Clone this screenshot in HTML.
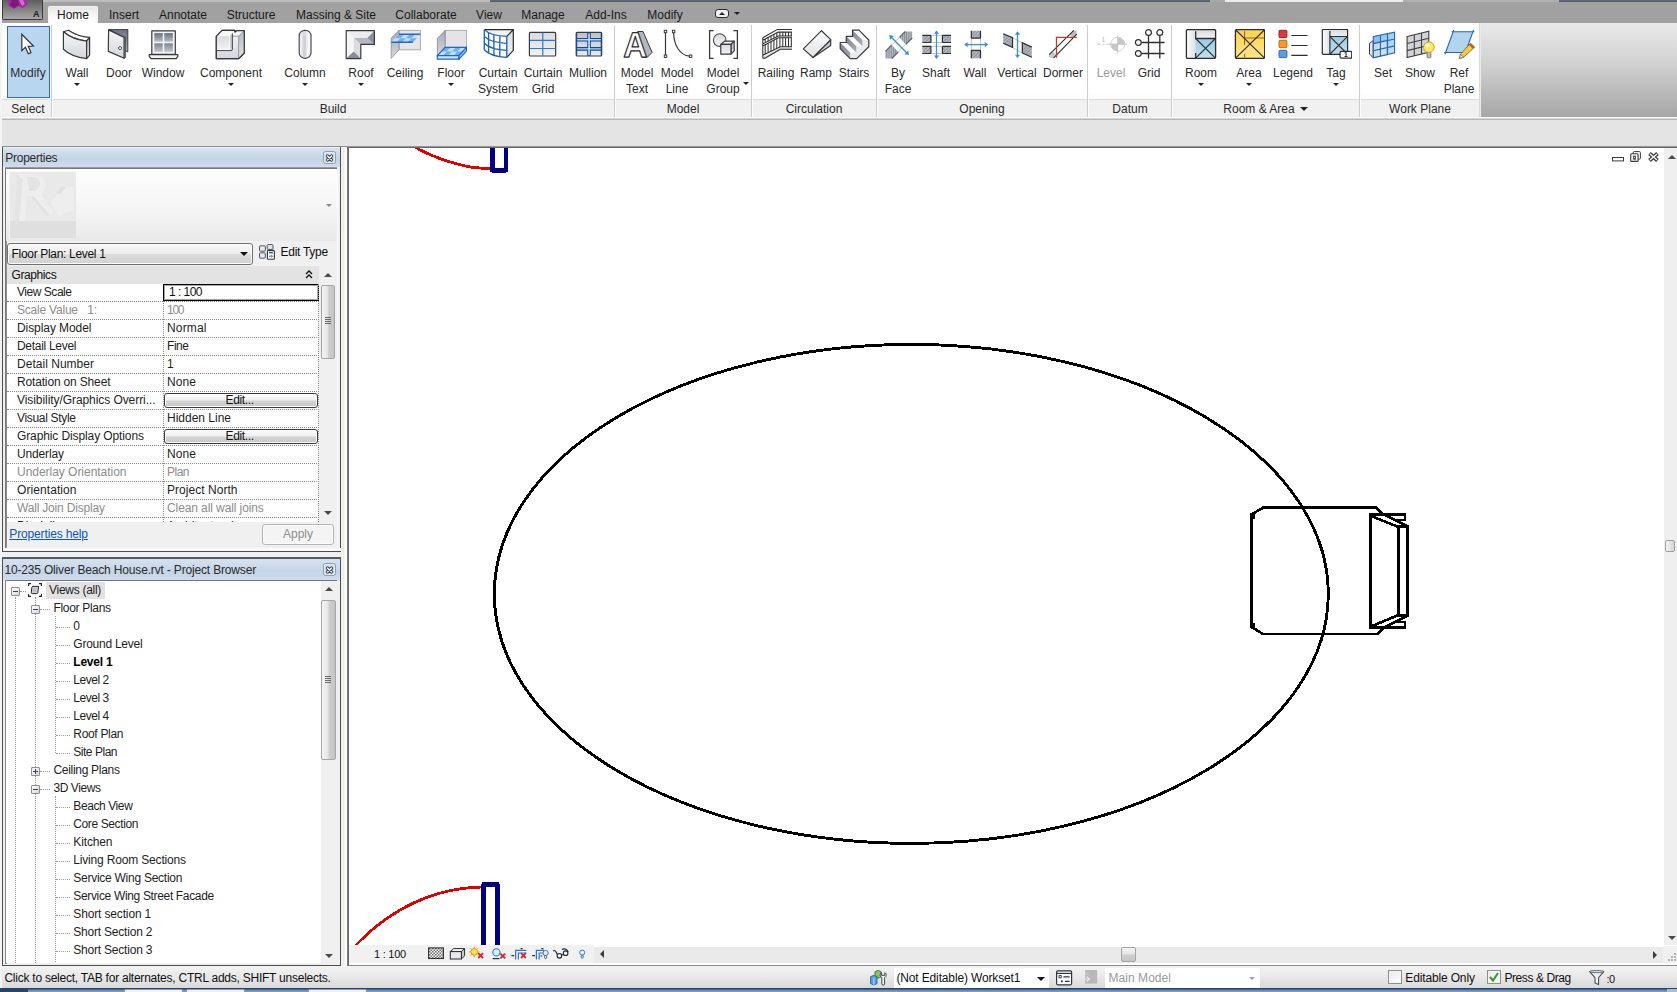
<!DOCTYPE html>
<html><head><meta charset="utf-8"><title>Revit</title><style>
*{box-sizing:border-box;margin:0;padding:0}
html,body{width:1677px;height:992px;overflow:hidden;background:#fff}
body{font-family:"Liberation Sans",sans-serif;font-size:12px;color:#1e1e1e;position:relative}
.a{position:absolute}
.t{position:absolute;white-space:nowrap;line-height:14px;height:14px}
.c{transform:translateX(-50%);text-align:center}
#topstrip{left:0;top:0;width:1677px;height:3px;background:#bdbdbd}
#tabbar{left:2px;top:2px;width:1675px;height:21px;background:#a1a1a1}
#ribbon{left:2px;top:23px;width:1478px;height:94px;background:linear-gradient(#ffffff 0,#ffffff 70px,#fbfbfb 76px)}
#ribrest{left:1480px;top:23px;width:197px;height:94px;background:linear-gradient(#e9e9e9,#d0d0d0 45%,#a6a6a6)}
#ptitle{left:2px;top:99px;width:1478px;height:18px;background:#f1f1f1;border-top:1px solid #dcdcdc}
.sep{position:absolute;top:25px;width:2px;height:92px;background:linear-gradient(90deg,#cdcdcd 0,#cdcdcd 1px,#fdfdfd 1px)}
#ribline{left:2px;top:117px;width:1675px;height:3px;background:linear-gradient(#fdfdfd 0,#fdfdfd 45%,#b2b2b2 55%,#b6b6b6 83%,#e4e4e4 100%)}
#optbar{left:2px;top:120px;width:1675px;height:26px;background:#e4e4e4}
#optline{left:2px;top:146px;width:345px;height:2px;background:linear-gradient(#8c8c8c 0,#8c8c8c 50%,#f2f2f2 50%)}
#dock{left:2px;top:148px;width:347px;height:819px;background:#f0f0f0}
.rl{color:#2b2b2b}
.pt{color:#2a2a2a}
.tab{color:#1a1a1a;font-size:12px}
.arr{position:absolute;width:0;height:0;border-left:3px solid transparent;border-right:3px solid transparent;border-top:3px solid #222}
.panel{position:absolute;background:#f0f0f0;border:1px solid #6d6d6d}
.ptbar{position:absolute;left:0;top:0;right:0;height:20px;background:linear-gradient(#dfe8f3,#c3d3e5);border-bottom:1px solid #6f7b88}
.xbtn{position:absolute;width:13px;height:13px;border:1px solid #8c9db4;border-radius:2.5px;background:#d3dfee;box-shadow:inset 0 0 0 1px #dfe8f4}
.row{position:absolute;left:0;width:312px;height:18px;border-bottom:1px dotted #8a8a8a}
.row .l{position:absolute;left:10px;top:1px;line-height:14px;white-space:nowrap;letter-spacing:-.27px}
.row .v{position:absolute;left:160px;top:1px;line-height:14px;white-space:nowrap;letter-spacing:-.27px}
.g{color:#8c8c8c}
.gdi{letter-spacing:-.27px}
.ebtn{position:absolute;left:157px;width:154px;height:15px;border:1px solid #3c3c3c;border-radius:3px;background:linear-gradient(#fdfdfd,#f0f0f0 45%,#d4d4d4 55%,#c8c8c8);text-align:center;line-height:13px;box-shadow:inset 0 0 0 1px #fff}
.tr{position:absolute;white-space:nowrap;line-height:14px;height:14px}
.hd{position:absolute;height:0;border-top:1px dotted #9a9a9a}
.vd{position:absolute;width:0;border-left:1px dotted #9a9a9a}
.box{position:absolute;width:9px;height:9px;border:1px solid #8e8e8e;background:linear-gradient(135deg,#fff,#d6d6d6);border-radius:1px}
.box i{position:absolute;left:1px;top:3px;width:5px;height:1px;background:#34426b}
.box b{position:absolute;left:3px;top:1px;width:1px;height:5px;background:#34426b}
.sb{position:absolute;background:#f0f0f0}
.thumb{position:absolute;border:1px solid #a6a6a6;border-radius:2px;background:linear-gradient(90deg,#f4f4f4,#e6e6e6 45%,#cfcfcf 55%,#c4c4c4)}
.ua{position:absolute;width:0;height:0;border-left:4px solid transparent;border-right:4px solid transparent;border-bottom:4px solid #4a4a4a}
.da{position:absolute;width:0;height:0;border-left:4px solid transparent;border-right:4px solid transparent;border-top:4px solid #4a4a4a}
.la{position:absolute;width:0;height:0;border-top:4px solid transparent;border-bottom:4px solid transparent;border-right:4px solid #3a3a3a}
.ra{position:absolute;width:0;height:0;border-top:4px solid transparent;border-bottom:4px solid transparent;border-left:4px solid #3a3a3a}
.grip{position:absolute;width:6px;height:7px;background:repeating-linear-gradient(#6a6a6a 0,#6a6a6a 1px,transparent 1px,transparent 2px)}
.cb{position:absolute;width:14px;height:14px;border:1px solid #8e8f8f;background:linear-gradient(135deg,#e9e9e9,#fff);box-shadow:inset 0 0 0 1px #f4f4f4}
</style></head><body>

<svg width="0" height="0" style="position:absolute"><defs>
<linearGradient id="gv" x1="0" y1="0" x2="0" y2="1"><stop offset="0" stop-color="#f7f7f8"/><stop offset="1" stop-color="#d4d6da"/></linearGradient>
<linearGradient id="gvl" x1="0" y1="0" x2="0" y2="1"><stop offset="0" stop-color="#fdfdfd"/><stop offset="1" stop-color="#e0e2e5"/></linearGradient>
<linearGradient id="gw" x1="0" y1="0" x2="0" y2="1"><stop offset="0" stop-color="#a4a8b1"/><stop offset="1" stop-color="#d9dadd"/></linearGradient>
<linearGradient id="gmu" x1="0" y1="0" x2="0" y2="1"><stop offset="0" stop-color="#bfc1c7"/><stop offset="1" stop-color="#ececee"/></linearGradient>
<linearGradient id="gv2" x1="0" y1="0" x2="0" y2="1"><stop offset="0" stop-color="#d9dbdf"/><stop offset="1" stop-color="#f2f2f3"/></linearGradient>
<linearGradient id="gd" x1="0" y1="0" x2="0" y2="1"><stop offset="0" stop-color="#6b7080"/><stop offset="1" stop-color="#b9bdc6"/></linearGradient>
<linearGradient id="gs" x1="0" y1="0" x2="0" y2="1"><stop offset="0" stop-color="#b4b8c1"/><stop offset="1" stop-color="#e3e4e7"/></linearGradient>
<linearGradient id="gh" x1="0" y1="0" x2="1" y2="0"><stop offset="0" stop-color="#fdfdfd"/><stop offset=".42" stop-color="#d4d6db"/><stop offset=".7" stop-color="#f1f1f2"/><stop offset="1" stop-color="#fefefe"/></linearGradient>
<linearGradient id="gy" x1="0" y1="0" x2="0" y2="1"><stop offset="0" stop-color="#ffd24d"/><stop offset="1" stop-color="#ffe68c"/></linearGradient>
<linearGradient id="gb" x1="0" y1="0" x2="0" y2="1"><stop offset="0" stop-color="#9ccbe6"/><stop offset="1" stop-color="#bfe0f1"/></linearGradient>
<linearGradient id="gbl" x1="0" y1="0" x2="1" y2="1"><stop offset="0" stop-color="#7ab7ee"/><stop offset="1" stop-color="#cfe6fb"/></linearGradient>
<pattern id="chk" width="6" height="6" patternUnits="userSpaceOnUse"><rect width="6" height="6" fill="#b9dbf8"/><rect width="3" height="3" fill="#6fb0ef"/><rect x="3" y="3" width="3" height="3" fill="#6fb0ef"/></pattern>
<pattern id="hat" width="2.5" height="2.5" patternUnits="userSpaceOnUse" patternTransform="rotate(-45)"><rect width="2.5" height="2.5" fill="#b3b7bf"/><rect width="2.5" height="1" fill="#8e939c"/></pattern>
<pattern id="vhat" width="2.2" height="4" patternUnits="userSpaceOnUse"><rect width="2.2" height="4" fill="#b3b7bf"/><rect width=".9" height="4" fill="#868b95"/></pattern>
<pattern id="chk2" width="3" height="3" patternUnits="userSpaceOnUse"><rect width="3" height="3" fill="#fff"/><rect width="1.5" height="1.5" fill="#6a6a6a"/><rect x="1.5" y="1.5" width="1.5" height="1.5" fill="#6a6a6a"/></pattern>
</defs></svg>

<div class="a" id="topstrip"></div>
<div class="a" id="tabbar"></div>
<div class="a" style="left:490px;top:0;width:720px;height:2px;background:linear-gradient(#69707e,#4d5564)"></div>
<div class="a" style="left:1210px;top:0;width:15px;height:2px;background:#a8a8a8"></div>
<div class="a" style="left:1225px;top:0;width:178px;height:2px;background:#ececec"></div>
<div class="a" style="left:1403px;top:0;width:156px;height:2px;background:#b0b0b0"></div>
<div class="a" style="left:1559px;top:0;width:118px;height:2px;background:linear-gradient(#69707e,#4d5564)"></div>
<div class="a" style="left:0;top:0;width:2px;height:992px;background:#f4f4f4"></div>
<div class="a" id="ribbon"></div>
<div class="a" id="ribrest"></div>
<div class="a" id="ptitle"></div>
<div class="a" id="ribline"></div>
<div class="a" id="optbar"></div>
<div class="a" id="optline"></div>
<div class="a" id="dock"></div>
<div class="a" style="left:2px;top:0;width:41px;height:20px;background:linear-gradient(#5e5e5e,#8a8a8a 60%,#a8a8a8);border:1px solid #3a3a3a;border-top:0;border-radius:0 0 2px 2px"></div>
<svg class="a" style="left:6px;top:0" width="24" height="12" viewBox="0 0 24 12"><path d="M2 0 L20 0 L22 4 L17 8 L12 6 L8 9 L3 6 Z" fill="#a3279c"/><path d="M6 0 L12 0 L13 5 L8 8 L4 5Z" fill="#7a1a78"/><path d="M13 0 L17 0 L19 4 L16 6 Z" fill="#d06ccc"/></svg>
<div class="t" style="left:33px;top:9px;font-size:9px;font-weight:bold;color:#1b1b1b;line-height:10px">A</div>
<div class="a" style="left:48px;top:6px;width:50px;height:18px;background:linear-gradient(#e6e6e6,#fafafa 60%,#ffffff);border:1px solid #f4f4f4;border-bottom:0;border-radius:2px 2px 0 0"></div>
<div class="t c tab" style="left:73px;top:8px">Home</div>
<div class="t c tab" style="left:124px;top:8px">Insert</div>
<div class="t c tab" style="left:183px;top:8px">Annotate</div>
<div class="t c tab" style="left:251px;top:8px">Structure</div>
<div class="t c tab" style="left:336px;top:8px">Massing &amp; Site</div>
<div class="t c tab" style="left:426px;top:8px">Collaborate</div>
<div class="t c tab" style="left:489px;top:8px">View</div>
<div class="t c tab" style="left:543px;top:8px">Manage</div>
<div class="t c tab" style="left:606px;top:8px">Add-Ins</div>
<div class="t c tab" style="left:665px;top:8px">Modify</div>
<div class="a" style="left:715px;top:9px;width:14px;height:9px;border:1px solid #2d2d2d;border-radius:3px;background:#f0f0f0"></div>
<div class="ua" style="left:719px;top:12px;border-left-width:3px;border-right-width:3px;border-bottom-width:3px;border-bottom-color:#222"></div>
<div class="arr" style="left:734px;top:12px"></div>
<div class="a" style="left:7px;top:26px;width:43px;height:72px;background:#b9d6f1;border:1px solid #2b6cb5"></div>
<div class="sep" style="left:51px"></div>
<div class="sep" style="left:614px"></div>
<div class="sep" style="left:751px"></div>
<div class="sep" style="left:876px"></div>
<div class="sep" style="left:1087px"></div>
<div class="sep" style="left:1171px"></div>
<div class="sep" style="left:1359px"></div>
<div class="a" style="left:1479px;top:23px;width:2px;height:94px;background:linear-gradient(90deg,#d0d0d0,#f4f4f4)"></div>
<svg class="a" style="left:12px;top:29px" width="32" height="32" viewBox="0 0 32 32"><path d="M9.8 5.3 V21.6 L13.4 18.3 L16.3 24.8 L19 23.6 L16.2 17.3 L21.4 17 Z" fill="#fcfcfc" stroke="#2e3440" stroke-width="1.2" stroke-linejoin="miter"/></svg>
<div class="t c rl" style="left:28px;top:66px">Modify</div>
<svg class="a" style="left:61px;top:29px" width="32" height="32" viewBox="0 0 32 32"><path d="M2.4 2.8 L7.4 1.2 C13 5 20 7.6 28.6 8.4 L25.6 12.2 C17 11.2 8 7.6 2.4 2.8Z" fill="#fafafa" stroke="#3a3a3c" stroke-width="1.2" stroke-linejoin="round"/><path d="M2.4 2.8 C8 7.6 17 11.2 25.6 12.2 V29.6 C16 28.4 8 25.6 2.4 20.2Z" fill="url(#gv)" stroke="#3a3a3c" stroke-width="1.2" stroke-linejoin="round"/><path d="M25.6 12.2 L28.6 8.4 V26.1 L25.6 29.6Z" fill="url(#gs)" stroke="#3a3a3c" stroke-width="1.2" stroke-linejoin="round"/></svg>
<div class="t c rl" style="left:77px;top:66px">Wall</div>
<div class="arr" style="left:74px;top:83px"></div>
<svg class="a" style="left:103px;top:29px" width="32" height="32" viewBox="0 0 32 32"><path d="M5.6 0.4 H24.8 V22.9 L21.2 21 V8.4Z" fill="url(#gd)" stroke="#3a3a3c" stroke-width="1"/><path d="M5.6 0.9 L21.2 8.4 V29.3 L5.3 22.4Z" fill="url(#gv)" stroke="#3a3a3c" stroke-width="1.2" stroke-linejoin="round"/><path d="M21.2 8.4 L22.6 7.8 V28.4 L21.2 29.3Z" fill="#9a9ea8" stroke="#3a3a3c" stroke-width=".8"/><circle cx="17.1" cy="19.1" r="1.5" fill="#fff" stroke="#3a3a3c" stroke-width=".9"/></svg>
<div class="t c rl" style="left:119px;top:66px">Door</div>
<svg class="a" style="left:147px;top:29px" width="32" height="32" viewBox="0 0 32 32"><rect x="4.8" y="1.8" width="23.5" height="23.6" fill="#f4f4f5" stroke="#3a3a3c" stroke-width="1.2" stroke-linejoin="round"/><rect x="7.3" y="4.1" width="8.4" height="8.6" fill="url(#gd)"/><rect x="17.3" y="4.1" width="8.6" height="8.6" fill="url(#gd)"/><rect x="7.3" y="14.3" width="8.4" height="8.5" fill="url(#gd)" opacity=".85"/><rect x="17.3" y="14.3" width="8.6" height="8.5" fill="url(#gd)" opacity=".85"/><path d="M2.2 25.6 H30.8 V27.4 L29.2 29.6 H4 L2.2 27.4Z" fill="#f2f2f3" stroke="#3a3a3c" stroke-width="1.2" stroke-linejoin="round"/></svg>
<div class="t c rl" style="left:163px;top:66px">Window</div>
<svg class="a" style="left:215px;top:29px" width="32" height="32" viewBox="0 0 32 32"><path d="M1.3 7.3 L7 1.4 H19.9 V3 L22.2 1.6 H29.3 V24 L23.6 29.6 H1.3Z" fill="url(#gv)" stroke="#3a3a3c" stroke-width="1.2" stroke-linejoin="round"/><path d="M23.6 7.2 L29.3 1.6 V24 L23.6 29.6Z" fill="url(#gs)"/><path d="M17.4 7.2 L22.2 1.6 H29.3 L23.6 7.2Z" fill="#f7f7f8"/><path d="M1.3 7.3 L7 1.4 H19.9 L14.6 7.3Z" fill="#f7f7f8"/><path d="M14.6 7.3 L17.4 4.2 V18 L14.6 20.4Z" fill="#c3c6cd"/><rect x="1.3" y="7.3" width="13.3" height="13.1" fill="url(#gv2)"/><path d="M23.6 7.2 V29.6 M23.6 7.2 L29.3 1.6 M17.4 7.2 H23.6" fill="none" stroke="#8d9097" stroke-width=".9"/><path d="M1.3 21.6 H16 Q17.4 21.6 17.4 20.2 V4.4" fill="none" stroke="#4a4a4e" stroke-width="1"/><path d="M1.3 20.3 H14.6 V7.3" fill="none" stroke="#fff" stroke-width="1"/><path d="M1.3 7.3 L7 1.4 H19.9 V3 L22.2 1.6 H29.3 V24 L23.6 29.6 H1.3Z" fill="none" stroke="#3a3a3c" stroke-width="1.2" stroke-linejoin="round"/></svg>
<div class="t c rl" style="left:231px;top:66px">Component</div>
<div class="arr" style="left:228px;top:83px"></div>
<svg class="a" style="left:289px;top:29px" width="32" height="32" viewBox="0 0 32 32"><rect x="10.2" y="1.3" width="11.8" height="28" rx="5.6" fill="url(#gh)" stroke="#4a4a4c" stroke-width="1.2"/><rect x="14.2" y="6.5" width="2.8" height="20.5" fill="#c6c9cf" opacity=".55"/></svg>
<div class="t c rl" style="left:305px;top:66px">Column</div>
<div class="arr" style="left:302px;top:83px"></div>
<svg class="a" style="left:345px;top:29px" width="32" height="32" viewBox="0 0 32 32"><path d="M1.2 1.7 H29.4 L22.4 9 H8.7Z" fill="#ececee"/><path d="M1.2 1.7 L8.7 9 V22.4 L1.2 29.6Z" fill="#f6f6f7"/><path d="M8.7 9 H22.4 L29.4 15.4 H15.8Z" fill="#b4b8c0"/><path d="M8.7 9 L15.8 15.4 V29.6 L8.7 22.4Z" fill="#dcdde0"/><path d="M22.4 9 L29.4 1.7 V15.4Z" fill="#8b909c"/><path d="M8.7 22.4 L1.2 29.6 H15.8Z" fill="#868b97"/><path d="M1.2 1.7 H29.4 V15.4 H15.8 V29.6 H1.2Z" fill="none" stroke="#3a3a3c" stroke-width="1.2" stroke-linejoin="round"/></svg>
<div class="t c rl" style="left:361px;top:66px">Roof</div>
<div class="arr" style="left:358px;top:83px"></div>
<svg class="a" style="left:389px;top:29px" width="32" height="32" viewBox="0 0 32 32"><path d="M10 1.4 H31.4 V20.8 H10Z" fill="#e6e6e8" stroke="#9a9a9c" stroke-width=".8"/><path d="M10 1.4 L2.2 9 V29.3 L10 20.8Z" fill="url(#gw)" stroke="#8e8e90" stroke-width=".8"/><path d="M10 5.2 L31.4 5.2 L23.9 13.2 L2.2 13.2Z" fill="#c4e0f9"/><path d="M10.0 5.2 L15.35 5.2 L11.49 9.2 L6.1 9.2Z M11.49 9.2 L16.88 9.2 L13.05 13.2 L7.62 13.2Z M20.7 5.2 L26.05 5.2 L22.26 9.2 L16.88 9.2Z M22.26 9.2 L27.65 9.2 L23.9 13.2 L18.47 13.2Z " fill="#6fb0ef"/><path d="M10 5.2 H31.4 M2.2 13.2 H23.9" stroke="#1f68c6" stroke-width="1.5"/></svg>
<div class="t c rl" style="left:405px;top:66px">Ceiling</div>
<svg class="a" style="left:435px;top:29px" width="32" height="32" viewBox="0 0 32 32"><path d="M10.1 1.4 H31.6 V18.4 H10.1Z" fill="#e4e4e6" stroke="#9a9a9c" stroke-width=".8"/><path d="M10.1 1.4 L2.4 9.5 V26.7 L10.1 18.4Z" fill="url(#gw)" stroke="#86868a" stroke-width=".8"/><path d="M10.1 18.4 L31.6 18.4 L24 26.7 L2.4 26.7Z" fill="#c4e0f9"/><path d="M10.1 18.4 L15.47 18.4 L11.64 22.55 L6.25 22.55Z M11.64 22.55 L17.03 22.55 L13.2 26.7 L7.8 26.7Z M20.85 18.4 L26.23 18.4 L22.41 22.55 L17.03 22.55Z M22.41 22.55 L27.8 22.55 L24.0 26.7 L18.6 26.7Z " fill="#6fb0ef"/><path d="M10.1 18.4 H31.6 L24 26.7 H2.4Z" fill="none" stroke="#1f68c6" stroke-width="1.2"/><path d="M2.4 26.7 H24 V30.2 H2.4Z" fill="#cfe6fb" stroke="#1f68c6" stroke-width="1.2"/><path d="M24 26.7 L31.6 18.4 V21.8 L24 30.2Z" fill="#9ccaf4" stroke="#1f68c6" stroke-width="1.2"/></svg>
<div class="t c rl" style="left:451px;top:66px">Floor</div>
<div class="arr" style="left:448px;top:83px"></div>
<svg class="a" style="left:482px;top:29px" width="32" height="32" viewBox="0 0 32 32"><path d="M2.3 .6 H31.3 L24.8 7.3 C14 7 6 4.4 2.3 .6Z" fill="#f1f1f2"/><path d="M24.8 7.3 L31.3 .6 V21.3 L24.8 28.3Z" fill="url(#gv2)"/><path d="M2.3 .6 C6 4.4 14 7 24.8 7.3 V28.3 C14 28 6 25 2.3 20.8Z" fill="#fbfcfe"/><path d="M2.3 .6 H31.3 V21.3 L24.8 28.3 M24.8 7.3 L31.3 .6" fill="none" stroke="#2a2a2c" stroke-width="1.2"/><path d="M2.3 .6 C6 4.4 14 7 24.8 7.3 M2.3 7.4 C6 11.2 14 13.8 24.8 14.3 M2.3 14.2 C6 18 14 20.8 24.8 21.3 M2.3 20.8 C6 25 14 28 24.8 28.3 M2.3 .6 V20.8 M6.6 4 V24.6 M11.9 5.9 V26.9 M17.8 6.9 V28 M24.8 7.3 V28.3" fill="none" stroke="#2163ad" stroke-width="1.35"/></svg>
<div class="t c rl" style="left:498px;top:66px">Curtain</div>
<div class="t c rl" style="left:498px;top:82px">System</div>
<svg class="a" style="left:527px;top:29px" width="32" height="32" viewBox="0 0 32 32"><rect x="2.4" y="3.4" width="26.3" height="23.6" rx="1" fill="url(#gv2)" stroke="#3a3a3c" stroke-width="1.2" stroke-linejoin="round"/><path d="M15.8 3.6 V26.8 M2.6 11.3 H28.5 M2.6 19.5 H28.5" stroke="#2b78d0" stroke-width="1.2"/></svg>
<div class="t c rl" style="left:543px;top:66px">Curtain</div>
<div class="t c rl" style="left:543px;top:82px">Grid</div>
<svg class="a" style="left:572px;top:29px" width="32" height="32" viewBox="0 0 32 32"><rect x="4.2" y="3.4" width="25.5" height="23.6" rx="1" fill="url(#gmu)" stroke="#3a3a3c" stroke-width="1.2" stroke-linejoin="round"/><path d="M4.4 10.8 H29.5 M4.4 19.9 H29.5" stroke="#17498f" stroke-width="3.6"/><path d="M17 3.6 V26.8" stroke="#17498f" stroke-width="3.6"/><path d="M4.6 3.8 V26.6 M29.3 3.8 V26.6" stroke="#17498f" stroke-width="1.2"/><path d="M5.2 10.8 H28.8 M5.2 19.9 H28.8" stroke="#a8dcff" stroke-width="1.4"/><path d="M17 4.4 V26" stroke="#bfe6ff" stroke-width="1.6"/></svg>
<div class="t c rl" style="left:588px;top:66px">Mullion</div>
<svg class="a" style="left:621px;top:29px" width="32" height="32" viewBox="0 0 32 32"><path d="M16.6 2.5 L22 2.5 L31.1 23.4 L26.3 28.3 L21.3 28.3Z" fill="#b3b7bf" stroke="#3a3a3c" stroke-width="1" stroke-linejoin="round"/><text transform="translate(14.2 28.3) scale(.94 1)" x="0" y="0" text-anchor="middle" font-family="Liberation Sans,sans-serif" font-weight="bold" font-size="35.4" fill="#fbfbfb" stroke="#2e2e30" stroke-width="1.25" stroke-linejoin="round" opacity=".995" style="text-rendering:geometricPrecision">A</text></svg>
<div class="t c rl" style="left:637px;top:66px">Model</div>
<div class="t c rl" style="left:637px;top:82px">Text</div>
<svg class="a" style="left:661px;top:29px" width="32" height="32" viewBox="0 0 32 32"><path d="M4.5 3.6 V26 M12.6 3.8 C13 17 19 26 28.4 27.2" fill="none" stroke="#3a3a3c" stroke-width="1.2"/><g fill="#fff" stroke="#3a3a3c" stroke-width="1"><rect x="3.3" y="1.3" width="2.4" height="2.4"/><rect x="3.3" y="26" width="2.4" height="2.4"/><rect x="11.4" y="1.3" width="2.4" height="2.4"/><rect x="28.4" y="26" width="2.4" height="2.4"/></g></svg>
<div class="t c rl" style="left:677px;top:66px">Model</div>
<div class="t c rl" style="left:677px;top:82px">Line</div>
<svg class="a" style="left:707px;top:29px" width="32" height="32" viewBox="0 0 32 32"><path d="M6.6 1.7 H2.6 V29.3 H6.6 M26.4 1.7 H30.4 V29.3 H26.4" fill="none" stroke="#3a3a3c" stroke-width="1.3"/><circle cx="12.7" cy="11.1" r="6.3" fill="url(#gv2)" stroke="#4a4a4c" stroke-width="1.1"/><path d="M13.8 15.4 L17.6 12.2 H27.2 L24 15.4Z" fill="#f4f4f5" stroke="#3a3a3c" stroke-width="1.2" stroke-linejoin="round"/><path d="M24 15.4 L27.2 12.2 V21.8 L24 25.1Z" fill="url(#gs)" stroke="#3a3a3c" stroke-width="1.2" stroke-linejoin="round"/><rect x="13.8" y="15.4" width="10.2" height="9.7" fill="url(#gv2)" stroke="#3a3a3c" stroke-width="1.2" stroke-linejoin="round"/></svg>
<div class="t c rl" style="left:723px;top:66px">Model</div>
<div class="t c rl" style="left:723px;top:82px">Group</div>
<div class="arr" style="left:743px;top:82px"></div>
<svg class="a" style="left:760px;top:29px" width="32" height="32" viewBox="0 0 32 32"><path d="M2.8 8.8 L17.5 .4 H32 V20.3 H20.3 L5 29.2 H2.8Z" fill="#fdfdfd"/><path d="M6 26.6 L20.3 18.4 H32 V20.3 H20.3 L5 29.2 H2.8 V28Z" fill="#d9dbdf"/><path d="M5.2 10.02 V13.67 M8.1 8.48 V12.18 M11 6.93 V10.69 M13.9 5.39 V9.21 M16.8 3.85 V7.72 M19.9 3.10 V7.00 M22.8 3.10 V7.00 M25.6 3.10 V7.00 M28.5 3.10 V7.00 M31.3 3.10 V7.00 M5.2 15.72 V25.13 M8.1 14.18 V23.73 M11 12.63 V22.32 M13.9 11.09 V20.91 M16.8 9.55 V19.50 M19.9 8.80 V17.99 M22.8 8.80 V17.80 M25.6 8.80 V17.80 M28.5 8.80 V17.80 M31.3 8.80 V17.80 " stroke="#2e2e30" stroke-width="1" fill="none"/><path d="M2.8 8.8 L17.5 .4 H32 M2.8 11.3 L18.2 3.1 H32 M2.8 14.9 L18.2 7 H32 M2.8 17 L18.2 8.8 H32 M2.8 26.3 L20.3 17.8 H32 M2.8 29.2 H5 L20.3 20.3 H32 M2.8 8.8 V29.2" fill="none" stroke="#2e2e30" stroke-width="1.05"/></svg>
<div class="t c rl" style="left:776px;top:66px">Railing</div>
<svg class="a" style="left:800px;top:29px" width="32" height="32" viewBox="0 0 32 32"><path d="M30.7 10.6 V16.5 L13 28.5Z" fill="url(#gs)" stroke="#3a3a3c" stroke-width="1.2" stroke-linejoin="round"/><path d="M3.3 19.9 L21.5 1.7 L30.7 10.6 L13 28.5Z" fill="url(#gvl)" stroke="#3a3a3c" stroke-width="1.2" stroke-linejoin="round"/></svg>
<div class="t c rl" style="left:816px;top:66px">Ramp</div>
<svg class="a" style="left:838px;top:29px" width="32" height="32" viewBox="0 0 32 32"><defs><linearGradient id="gr" x1="0" y1="0" x2="1" y2="1"><stop offset="0" stop-color="#6c727d"/><stop offset="1" stop-color="#bcc0c8"/></linearGradient></defs><path d="M12.2 23.4 H18.3 V17.3 H24.4 V11 H30.8 V17.7 L18.7 29.6 H12.2Z" fill="#e9ebee"/><path d="M14.5 1.2 H21 L30.8 11 H24.4Z M8.3 7.3 H14.5 L24.4 17.3 H18.3Z M2.2 13.5 H8.3 L18.3 23.4 H12.2Z" fill="#fdfdfd"/><path d="M14.5 1.2 V7.3 L24.4 17.3 V11Z M8.3 7.3 V13.5 L18.3 23.4 V17.3Z M2.2 13.5 V19.6 L12.2 29.6 V23.4Z" fill="url(#gr)"/><path d="M2.2 13.5 H8.3 V7.3 H14.5 V1.2 H21 L30.8 11 V17.7 L18.7 29.6 H12.2 L2.2 19.6Z" fill="none" stroke="#3a3a3c" stroke-width="1.2" stroke-linejoin="round"/></svg>
<div class="t c rl" style="left:854px;top:66px">Stairs</div>
<svg class="a" style="left:882px;top:29px" width="32" height="32" viewBox="0 0 32 32"><path d="M17.4 8.4 L23.3 2.5 H30.2 V9 L23.8 15.4Z" fill="url(#vhat)"/><path d="M3.4 22.4 L9.8 15.9 L16.3 22.9 L9.8 29.6 H3.4Z" fill="url(#vhat)"/><path d="M17.4 8.4 L23.3 2.5 M23.8 15.4 L30.2 9 M3.4 22.4 L9.8 15.9 M9.8 29.6 L16.3 22.9" stroke="#55585f" stroke-width="1.1"/><path d="M9.8 15.9 L17.4 8.4 M16.3 22.9 L23.8 15.4" stroke="#c9c9cb" stroke-width="1"/><path d="M8.6 7.5 L25.6 24.7" stroke="#3b8de0" stroke-width="1.4"/><path d="M7.2 6.1 l4.6 .8 l-3.8 3.8Z M27 26.1 l-4.6 -.8 l3.8 -3.8Z" fill="#3b8de0"/></svg>
<div class="t c rl" style="left:898px;top:66px">By</div>
<div class="t c rl" style="left:898px;top:82px">Face</div>
<svg class="a" style="left:920px;top:29px" width="32" height="32" viewBox="0 0 32 32"><path d="M10.9 6.3 H22.4 M10.9 13.5 H22.4 M10.9 17.3 H22.4 M10.9 24.5 H22.4" stroke="#c4c4c6" stroke-width="1"/><rect x="2.3" y="6.3" width="8.6" height="7.2" fill="url(#hat)"/><path d="M2.3 6.3 H10.899999999999999 M2.3 13.5 H10.899999999999999 M10.899999999999999 6.3 V13.5 " stroke="#2e2e30" stroke-width="1.2" fill="none"/><rect x="22.4" y="6.3" width="8.6" height="7.2" fill="url(#hat)"/><path d="M22.4 6.3 H31.0 M22.4 13.5 H31.0 M22.4 6.3 V13.5 " stroke="#2e2e30" stroke-width="1.2" fill="none"/><rect x="2.3" y="17.3" width="8.6" height="7.2" fill="url(#hat)"/><path d="M2.3 17.3 H10.899999999999999 M2.3 24.5 H10.899999999999999 M10.899999999999999 17.3 V24.5 " stroke="#2e2e30" stroke-width="1.2" fill="none"/><rect x="22.4" y="17.3" width="8.6" height="7.2" fill="url(#hat)"/><path d="M22.4 17.3 H31.0 M22.4 24.5 H31.0 M22.4 17.3 V24.5 " stroke="#2e2e30" stroke-width="1.2" fill="none"/><path d="M16.5 2.4 V28.9" stroke="#3b8de0" stroke-width="1.3"/><path d="M16.5 1.4 l-2.6 3.4 h5.2Z M16.5 29.9 l-2.6 -3.4 h5.2Z" fill="#3b8de0"/></svg>
<div class="t c rl" style="left:936px;top:66px">Shaft</div>
<svg class="a" style="left:959px;top:29px" width="32" height="32" viewBox="0 0 32 32"><path d="M12.3 9.2 V21.3 M21.5 9.2 V21.3" stroke="#c4c4c6" stroke-width="1"/><rect x="12.3" y="1.7" width="9.2" height="7.5" fill="url(#hat)"/><path d="M12.3 9.2 H21.5 M21.5 1.7 V9.2 M12.3 1.7 V9.2 " stroke="#2e2e30" stroke-width="1.2" fill="none"/><rect x="12.3" y="21.3" width="9.2" height="8" fill="url(#hat)"/><path d="M12.3 21.3 H21.5 M21.5 21.3 V29.3 M12.3 21.3 V29.3 " stroke="#2e2e30" stroke-width="1.2" fill="none"/><path d="M6.2 15.6 H28.2" stroke="#3b8de0" stroke-width="1.3"/><path d="M5.2 15.6 l3.4 -2.6 v5.2Z M29.2 15.6 l-3.4 -2.6 v5.2Z" fill="#3b8de0"/></svg>
<div class="t c rl" style="left:975px;top:66px">Wall</div>
<svg class="a" style="left:1001px;top:29px" width="32" height="32" viewBox="0 0 32 32"><path d="M11.5 8.7 L21.3 13.8 M11.5 18.4 L21.3 24" stroke="#c4c4c6" stroke-width="1"/><path d="M2.2 4.7 L11.5 8.7 V18.4 L2.2 14.3Z" fill="url(#hat)"/><path d="M21.3 13.8 L30.8 18.1 V28.3 L21.3 24Z" fill="url(#hat)"/><path d="M2.2 4.7 L11.5 8.7 V18.4 L2.2 14.3 M21.3 24 V13.8 L30.8 18.1 M21.3 24 L30.8 28.3" fill="none" stroke="#2e2e30" stroke-width="1.2"/><path d="M16.5 3.3 V28.1" stroke="#3b8de0" stroke-width="1.3"/><path d="M16.5 2.3 l-2.6 3.4 h5.2Z M16.5 29.1 l-2.6 -3.4 h5.2Z" fill="#3b8de0"/></svg>
<div class="t c rl" style="left:1017px;top:66px">Vertical</div>
<svg class="a" style="left:1047px;top:29px" width="32" height="32" viewBox="0 0 32 32"><path d="M22.5 5.5 L26.8 1.4 H29.4 L29.8 5.2 L26 9Z" fill="#b8bcc3"/><path d="M2.2 25.6 L5.8 22.2 L9.4 26 L6.5 29.1 H3.2 L1.8 27.6Z" fill="#c6c9ce"/><path d="M2.2 25.6 L26.8 1.4 M6.5 29.1 L29.8 5.2" stroke="#2e2e30" stroke-width="1.1"/><path d="M9.5 28.8 V8.4 H29.8" fill="none" stroke="#c2392f" stroke-width="1.3"/></svg>
<div class="t c rl" style="left:1063px;top:66px">Dormer</div>
<svg class="a" style="left:1095px;top:29px" width="32" height="32" viewBox="0 0 32 32"><path d="M22.7 15.2 V8.2 A7 7 0 0 1 29.7 15.2Z M22.7 15.2 V22.2 A7 7 0 0 1 15.7 15.2Z" fill="#c6c6c6"/><circle cx="22.7" cy="15.2" r="7" fill="none" stroke="#d4d4d4" stroke-width="1"/><path d="M2 15.2 H6 M8 15.2 H9.5 M11.5 15.2 H32 M22.7 6.3 V24.5" stroke="#c6c6c6" stroke-width="1"/><text x="6.2" y="12.6" font-family="Liberation Sans,sans-serif" font-size="7.5" fill="#bdbdbd">1</text></svg>
<div class="t c rl" style="left:1111px;top:66px;color:#9a9a9a">Level</div>
<svg class="a" style="left:1133px;top:29px" width="32" height="32" viewBox="0 0 32 32"><path d="M15.5 6.3 V29.6 M26.8 6.3 V29.6 M8.3 13.5 H31.6 M8.3 24.5 H31.6" stroke="#2e2e30" stroke-width="1.3"/><g fill="#fff" stroke="#2e2e30" stroke-width="1.2"><circle cx="15.5" cy="3.5" r="2.9"/><circle cx="26.8" cy="3.5" r="2.9"/><circle cx="5.3" cy="13.5" r="2.9"/><circle cx="5.3" cy="24.5" r="2.9"/></g></svg>
<div class="t c rl" style="left:1149px;top:66px">Grid</div>
<svg class="a" style="left:1185px;top:29px" width="32" height="32" viewBox="0 0 32 32"><rect x="1.4" y=".6" width="29.2" height="28.7" rx="1.2" fill="url(#gh)"/><rect x="10.7" y="1" width="19.6" height="8.6" fill="url(#gv2)"/><rect x="10.7" y="9.5" width="19.7" height="19.6" fill="url(#gb)"/><path d="M10.7 9.5 L30.4 29.1 M30.4 9.5 L10.7 29.1" stroke="#2e2e30" stroke-width="1.1"/><path d="M10.7 2.3 V9.5 H30.6 M10.7 24 V29.3" fill="none" stroke="#2e2e30" stroke-width="1.3"/><rect x="1.4" y=".6" width="29.2" height="28.7" rx="1.2" fill="none" stroke="#2e2e30" stroke-width="1.3"/></svg>
<div class="t c rl" style="left:1201px;top:66px">Room</div>
<div class="arr" style="left:1198px;top:83px"></div>
<svg class="a" style="left:1233px;top:29px" width="32" height="32" viewBox="0 0 32 32"><rect x="2.4" y=".6" width="29.3" height="28.7" rx="1.2" fill="url(#gy)" stroke="#2e2e30" stroke-width="1.3"/><path d="M11.6 2.3 V15.9 M11.6 25 V28.5 M11.6 9 H31.4" fill="none" stroke="#8a6d14" stroke-width="1.1"/><path d="M2.8 1 L31.3 28.9 M31.3 1 L2.8 28.9" stroke="#2e2e30" stroke-width="1.1"/></svg>
<div class="t c rl" style="left:1249px;top:66px">Area</div>
<div class="arr" style="left:1246px;top:83px"></div>
<svg class="a" style="left:1277px;top:29px" width="32" height="32" viewBox="0 0 32 32"><rect x="2" y="1.3" width="7.9" height="7.3" rx="1" fill="#dc3b3e" stroke="#a01e22" stroke-width="1"/><rect x="2" y="11.3" width="7.9" height="7.4" rx="1" fill="#f79a1f" stroke="#c46a0a" stroke-width="1"/><rect x="2" y="21.3" width="7.9" height="7.3" rx="1" fill="#5b9fe2" stroke="#2b6cb5" stroke-width="1"/><path d="M14.3 6.5 H30.6 M14.3 16.5 H30.6 M14.3 26.3 H30.6" stroke="#2e2e30" stroke-width="1.2"/></svg>
<div class="t c rl" style="left:1293px;top:66px">Legend</div>
<svg class="a" style="left:1320px;top:29px" width="32" height="32" viewBox="0 0 32 32"><rect x="2.3" y=".4" width="25.3" height="24.9" rx="1" fill="url(#gh)"/><rect x="9.9" y=".8" width="17.4" height="7" fill="url(#gv2)"/><rect x="10.1" y="7.6" width="17.3" height="17.5" fill="url(#gb)"/><path d="M10.1 7.6 L27.4 25 M27.4 7.6 L10.1 25" stroke="#2e2e30" stroke-width="1.1"/><path d="M9.9 1.9 V25 M9.9 7.5 H27.4" fill="none" stroke="#2e2e30" stroke-width="1.2"/><rect x="2.3" y=".4" width="25.3" height="24.9" rx="1" fill="none" stroke="#2e2e30" stroke-width="1.2"/><rect x="20.1" y="22.3" width="11.6" height="6.8" rx="1" fill="#fff" stroke="#2e2e30" stroke-width="1.2"/><text x="25.9" y="28.3" text-anchor="middle" font-family="Liberation Sans,sans-serif" font-weight="bold" font-size="6.6" fill="#111">1</text></svg>
<div class="t c rl" style="left:1336px;top:66px">Tag</div>
<div class="arr" style="left:1333px;top:83px"></div>
<svg class="a" style="left:1367px;top:29px" width="32" height="32" viewBox="0 0 32 32"><path d="M2.5 14.4 L6.3 11.5 V28.8 L2.5 25Z" fill="#e8e8ea" stroke="#3a3a3c" stroke-width="1"/><path d="M6.3 7.5 L27.6 3.1 V23.8 L6.3 28.8Z" fill="url(#gbl)"/><path d="M6.3 14 L20 11 V26 L6.3 28.8Z" fill="#d9e4ee" opacity=".7" stroke="#6a7a8a" stroke-width=".7"/><path d="M6.3 7.5 L27.6 3.1 V23.8 L6.3 28.8Z M13.4 6 V27.2 M20.5 4.6 V25.5 M6.3 14.6 L27.6 10 M6.3 21.7 L27.6 16.9" fill="none" stroke="#2565ae" stroke-width="1.1"/></svg>
<div class="t c rl" style="left:1383px;top:66px">Set</div>
<svg class="a" style="left:1404px;top:29px" width="32" height="32" viewBox="0 0 32 32"><path d="M3.1 7.5 L24.8 2.3 V23.2 L3.1 28.6Z" fill="#d2d3d6"/><path d="M3.1 7.5 L24.8 2.3 V23.2 L3.1 28.6Z M10.3 5.8 V26.8 M17.5 4 V25 M3.1 14.5 L24.8 9.3 M3.1 21.6 L24.8 16.2" fill="none" stroke="#3f3f42" stroke-width="1.1"/><rect x="23" y="23" width="3.9" height="5.8" rx="1" fill="#b9bcc2" stroke="#6a6a6c" stroke-width=".8"/><circle cx="24.9" cy="18.2" r="5.3" fill="#ffe763" stroke="#c9a41c" stroke-width="1"/><circle cx="23.4" cy="16.4" r="2" fill="#fff8c8"/></svg>
<div class="t c rl" style="left:1420px;top:66px">Show</div>
<svg class="a" style="left:1443px;top:29px" width="32" height="32" viewBox="0 0 32 32"><path d="M10.1 2.8 H29.9 L22.3 23.5 H2.6Z" fill="#b3d4ee"/><path d="M8.6 2.8 H31.4 M1.1 23.5 H23.8 M10.8 .9 L2 25.2 M30.6 .9 L21.7 25.2" stroke="#2565ae" stroke-width="1.1" fill="none"/><path d="M27.6 14.2 L31.6 18.2 L20.5 28.3 L16.4 29.4 L17.5 25.2Z" fill="#f6c945" stroke="#8a6a1a" stroke-width=".9" stroke-linejoin="round"/><path d="M27.6 14.2 L31.6 18.2 L29.8 19.8 L25.8 15.8Z" fill="#b0632a"/><path d="M17.5 25.2 L20.5 28.3 L16.4 29.4Z" fill="#f3f3f3" stroke="#555" stroke-width=".7"/></svg>
<div class="t c rl" style="left:1459px;top:66px">Ref</div>
<div class="t c rl" style="left:1459px;top:82px">Plane</div>
<div class="t c pt" style="left:28px;top:102px">Select</div>
<div class="t c pt" style="left:333px;top:102px">Build</div>
<div class="t c pt" style="left:683px;top:102px">Model</div>
<div class="t c pt" style="left:814px;top:102px">Circulation</div>
<div class="t c pt" style="left:982px;top:102px">Opening</div>
<div class="t c pt" style="left:1130px;top:102px">Datum</div>
<div class="t c pt" style="left:1259px;top:102px">Room &amp; Area</div>
<div class="t c pt" style="left:1420px;top:102px">Work Plane</div>
<div class="arr" style="left:1300px;top:107px;border-left-width:4px;border-right-width:4px;border-top-width:4px"></div>
<div class="panel" style="left:2px;top:147px;width:339px;height:405px;border-top:0;border-color:#4e4e4e"></div>
<div class="a" style="left:3px;top:148px;width:337px;height:19px;background:linear-gradient(#d6e2f0,#c4d4e7 60%,#cfdcec)"></div>
<div class="a" style="left:3px;top:167px;width:337px;height:1px;background:#f4f6f9"></div>
<div class="a" style="left:5px;top:167px;width:332px;height:2px;background:linear-gradient(#a9a9a9,#686868)"></div>
<div class="a" style="left:337px;top:168px;width:1px;height:381px;background:#fdfdfd"></div>
<div id="t_prop" class="t" style="left:5.3px;top:151px;letter-spacing:-0.266px;color:#2b2b2b">Properties</div>
<div class="xbtn" style="left:323px;top:151px"></div>
<svg class="a" style="left:323px;top:151.5px" width="13" height="12" viewBox="0 0 13 12"><path d="M4.4 4 L8.6 8 M8.6 4 L4.4 8" stroke="#3a3f48" stroke-width="3.2" stroke-linecap="round" fill="none"/><path d="M4.4 4 L8.6 8 M8.6 4 L4.4 8" stroke="#fbfcfe" stroke-width="1.3" stroke-linecap="round" fill="none"/></svg>
<div class="a" style="left:5px;top:168px;width:2px;height:380px;background:linear-gradient(90deg,#6c6c6c,#9a9a9a)"></div>
<div class="a" style="left:3px;top:548px;width:338px;height:3px;background:#fafafa"></div>
<div class="a" style="left:6px;top:169px;width:331px;height:72px;background:linear-gradient(#fdfdfd,#f6f6f6 50%,#e9e9e9)"></div>
<div class="a" style="left:9px;top:172px;width:67px;height:66px;background:linear-gradient(160deg,#ececec,#dedede 50%,#e6e6e6);border:1px solid #f3f3f3"></div>
<svg class="a" style="left:10px;top:172px" width="66" height="66" viewBox="0 0 66 66"><rect width="66" height="66" fill="#e9e9e9"/><rect y="49" width="66" height="17" fill="#dfdfdf"/><path d="M7 2 L4 49 L15 49 L17 24 L23 24 L37 44 L45 41 L31 22 C38 18 38 6 27 3 Z" fill="#eeeeee"/><path d="M17 5 L24 5 C32 7 32 15 25 19 L19 19Z" fill="#e3e3e3"/><path d="M7 2 L4 49 L9 49 L13 8Z" fill="#e4e4e4"/><path d="M21 25 L24 25 L40 43 L37 44Z" fill="#e2e2e2"/><path d="M40 30 L55 14 L64 15 L64 38 L48 44 Z" fill="#eeeeee"/><path d="M46 21 L53 14 L56 15 L50 22Z" fill="#e0e0e0"/></svg>
<div class="arr" style="left:326px;top:204px;border-top-color:#8c8c8c"></div>
<div class="a" style="left:7px;top:243px;width:246px;height:22px;border:1px solid #707070;border-radius:3px;background:linear-gradient(#f8f8f8,#ececec 50%,#dcdcdc 52%,#d2d2d2);box-shadow:inset 0 0 0 1px #fcfcfc"></div>
<div id="t_fp" class="t" style="left:11.6px;top:247px;letter-spacing:-0.321px;color:#111">Floor Plan: Level 1</div>
<div class="arr" style="left:240px;top:252px;border-left-width:4px;border-right-width:4px;border-top-width:4px;border-top-color:#111"></div>
<svg class="a" style="left:259px;top:244px" width="16" height="16" viewBox="0 0 16 16"><g fill="#e4e7eb" stroke="#50555c" stroke-width="1"><rect x=".5" y="1.8" width="5.8" height="5.4" rx=".8"/><rect x="8.2" y=".6" width="5.8" height="4.8" rx=".8"/><rect x=".5" y="8.8" width="5.8" height="5.4" rx=".8"/></g><rect x="8.4" y="6.4" width="7" height="8.9" rx="1" fill="#fff" stroke="#2e3640" stroke-width="1.1"/><rect x="10" y="7.8" width="4" height="1.6" fill="#1f5fa8"/><path d="M10 12.2 H12.5 M12.2 11 L13.6 12.2 L12.2 13.4" fill="none" stroke="#2e3640" stroke-width=".8"/></svg>
<div id="t_et" class="t" style="left:280.5px;top:245px;letter-spacing:-0.265px;color:#111">Edit Type</div>
<div class="a" style="left:7px;top:266px;width:312px;height:18px;background:#e3e3e3"></div>
<div id="t_gr" class="t" style="left:11.6px;top:268px;letter-spacing:-0.418px;color:#111">Graphics</div>
<svg class="a" style="left:305px;top:270px" width="8" height="9" viewBox="0 0 8 9"><path d="M1 4 L4 1 L7 4 M1 8 L4 5 L7 8" stroke="#111" stroke-width="1.3" fill="none"/></svg>
<div class="a" style="left:7px;top:284px;width:312px;height:238px;background:#fff;overflow:hidden">
<div class="row" style="top:0px"></div>
<div id="rl0" class="t" style="left:10px;top:1px;letter-spacing:-0.462px;">View Scale</div>
<div class="row" style="top:18px"></div>
<div id="rl1" class="t g" style="left:10px;top:19px;letter-spacing:-0.212px;">Scale Value &nbsp;&nbsp;1:</div>
<div id="rv1" class="t g" style="left:160px;top:19px;letter-spacing:-1.266px;">100</div>
<div class="row" style="top:36px"></div>
<div id="rl2" class="t" style="left:10px;top:37px;letter-spacing:-0.073px;">Display Model</div>
<div id="rv2" class="t" style="left:160px;top:37px;letter-spacing:0.166px;">Normal</div>
<div class="row" style="top:54px"></div>
<div id="rl3" class="t" style="left:10px;top:55px;letter-spacing:-0.292px;">Detail Level</div>
<div id="rv3" class="t" style="left:160px;top:55px;letter-spacing:-0.451px;">Fine</div>
<div class="row" style="top:72px"></div>
<div id="rl4" class="t" style="left:10px;top:73px;letter-spacing:0.025px;">Detail Number</div>
<div id="rv4" class="t" style="left:160px;top:73px;letter-spacing:-3.562px;">1</div>
<div class="row" style="top:90px"></div>
<div id="rl5" class="t" style="left:10px;top:91px;letter-spacing:-0.162px;">Rotation on Sheet</div>
<div id="rv5" class="t" style="left:160px;top:91px;letter-spacing:0.100px;">None</div>
<div class="row" style="top:108px"></div>
<div id="rl6" class="t" style="left:10px;top:109px;letter-spacing:-0.070px;">Visibility/Graphics Overri...</div>
<div class="ebtn" style="top:109px"></div>
<div id="rv6" class="t" style="left:218.5px;top:109px;letter-spacing:-0.363px;color:#111">Edit...</div>
<div class="row" style="top:126px"></div>
<div id="rl7" class="t" style="left:10px;top:127px;letter-spacing:-0.318px;">Visual Style</div>
<div id="rv7" class="t" style="left:160px;top:127px;letter-spacing:-0.006px;">Hidden Line</div>
<div class="row" style="top:144px"></div>
<div id="rl8" class="t" style="left:10px;top:145px;letter-spacing:-0.109px;">Graphic Display Options</div>
<div class="ebtn" style="top:145px"></div>
<div id="rv8" class="t" style="left:218.5px;top:145px;letter-spacing:-0.363px;color:#111">Edit...</div>
<div class="row" style="top:162px"></div>
<div id="rl9" class="t" style="left:10px;top:163px;letter-spacing:-0.147px;">Underlay</div>
<div id="rv9" class="t" style="left:160px;top:163px;letter-spacing:0.100px;">None</div>
<div class="row" style="top:180px"></div>
<div id="rl10" class="t g" style="left:10px;top:181px;letter-spacing:-0.029px;">Underlay Orientation</div>
<div id="rv10" class="t g" style="left:160px;top:181px;letter-spacing:-0.506px;">Plan</div>
<div class="row" style="top:198px"></div>
<div id="rl11" class="t" style="left:10px;top:199px;letter-spacing:0.080px;">Orientation</div>
<div id="rv11" class="t" style="left:160px;top:199px;letter-spacing:0.039px;">Project North</div>
<div class="row" style="top:216px"></div>
<div id="rl12" class="t g" style="left:10px;top:217px;letter-spacing:-0.189px;">Wall Join Display</div>
<div id="rv12" class="t g" style="left:160px;top:217px;letter-spacing:-0.097px;">Clean all wall joins</div>
<div class="row" style="top:234px"></div>
<div id="rl13" class="t" style="left:10px;top:235px;letter-spacing:0.000px;">Discipline</div>
<div id="rv13" class="t" style="left:160px;top:235px;letter-spacing:0.000px;">Architectural</div>
<div class="a" style="left:156px;top:0;width:0;height:238px;border-left:1px dotted #8a8a8a"></div>
<div class="a" style="left:156px;top:0;width:156px;height:17px;border:1px solid #000;outline:1px solid rgba(0,0,0,.35);outline-offset:-2px;background:#fff"></div>
<div id="rv0" class="t" style="left:162px;top:1px;letter-spacing:-0.535px;color:#111">1 : 100</div>
</div>
<div class="sb" style="left:321px;top:267px;width:15px;height:255px"></div>
<div class="ua" style="left:324px;top:273px"></div>
<div class="a" style="left:318px;top:284px;width:0;height:238px;border-left:1px dotted #8a8a8a"></div>
<div class="thumb" style="left:320.5px;top:284.5px;width:14px;height:74px"></div>
<div class="grip" style="left:324.5px;top:317px"></div>
<div class="da" style="left:324px;top:511px"></div>
<div id="t_ph" class="t" style="left:9.3px;top:527px;letter-spacing:-0.144px;color:#0b55c4;text-decoration:underline">Properties help</div>
<div class="a" style="left:262px;top:524px;width:72px;height:21px;border:1px solid #b5b5b5;border-radius:3px;background:#f4f4f4;text-align:center;line-height:19px;color:#8e8e8e;box-shadow:inset 0 0 0 1px #fcfcfc">Apply</div>
<div class="panel" style="left:2px;top:557px;width:339px;height:409px;border-color:#4e4e4e;border-top:2px solid #5a5a5a"></div>
<div class="a" style="left:3px;top:559px;width:337px;height:21px;background:linear-gradient(#d6e2f0,#c4d4e7 60%,#cfdcec)"></div>
<div class="a" style="left:5px;top:580px;width:332px;height:1px;background:#6f7781"></div>
<div class="a" style="left:5px;top:580px;width:2px;height:384px;background:linear-gradient(90deg,#7c7c7c,#a8a8a8)"></div>
<div id="t_pb" class="t" style="left:4.4px;top:563px;letter-spacing:-0.166px;color:#2b2b2b">10-235 Oliver Beach House.rvt - Project Browser</div>
<div class="xbtn" style="left:323px;top:563px"></div>
<svg class="a" style="left:323px;top:563.5px" width="13" height="12" viewBox="0 0 13 12"><path d="M4.4 4 L8.6 8 M8.6 4 L4.4 8" stroke="#3a3f48" stroke-width="3.2" stroke-linecap="round" fill="none"/><path d="M4.4 4 L8.6 8 M8.6 4 L4.4 8" stroke="#fbfcfe" stroke-width="1.3" stroke-linecap="round" fill="none"/></svg>
<div class="a" style="left:6px;top:581px;width:315px;height:382px;background:#fff;overflow:hidden">
<div class="a" style="left:40px;top:1px;width:59px;height:17px;background:#e2e2e2"></div>
<div id="tr1" class="tr" style="left:43px;top:2px;letter-spacing:-0.284px;">Views (all)</div>
<div id="tr2" class="tr" style="left:47.5px;top:20px;letter-spacing:-0.319px;">Floor Plans</div>
<div id="tr3" class="tr" style="left:67.3px;top:38px;letter-spacing:-2.341px;">0</div>
<div class="hd" style="left:50px;top:46px;width:14px"></div>
<div id="tr4" class="tr" style="left:67.3px;top:56px;letter-spacing:-0.250px;">Ground Level</div>
<div class="hd" style="left:50px;top:64px;width:14px"></div>
<div id="tr5" class="tr" style="left:67.3px;top:74px;letter-spacing:-0.216px;font-weight:bold;color:#000">Level 1</div>
<div class="hd" style="left:50px;top:82px;width:14px"></div>
<div id="tr6" class="tr" style="left:67.3px;top:92px;letter-spacing:-0.485px;">Level 2</div>
<div class="hd" style="left:50px;top:100px;width:14px"></div>
<div id="tr7" class="tr" style="left:67.3px;top:110px;letter-spacing:-0.485px;">Level 3</div>
<div class="hd" style="left:50px;top:118px;width:14px"></div>
<div id="tr8" class="tr" style="left:67.3px;top:128px;letter-spacing:-0.450px;">Level 4</div>
<div class="hd" style="left:50px;top:136px;width:14px"></div>
<div id="tr9" class="tr" style="left:67.3px;top:146px;letter-spacing:-0.314px;">Roof Plan</div>
<div class="hd" style="left:50px;top:154px;width:14px"></div>
<div id="tr10" class="tr" style="left:67.3px;top:164px;letter-spacing:-0.478px;">Site Plan</div>
<div class="hd" style="left:50px;top:172px;width:14px"></div>
<div id="tr11" class="tr" style="left:47.4px;top:182px;letter-spacing:-0.295px;">Ceiling Plans</div>
<div id="tr12" class="tr" style="left:47.4px;top:200px;letter-spacing:-0.411px;">3D Views</div>
<div id="tr13" class="tr" style="left:67.3px;top:218px;letter-spacing:-0.406px;">Beach View</div>
<div class="hd" style="left:50px;top:226px;width:14px"></div>
<div id="tr14" class="tr" style="left:67.3px;top:236px;letter-spacing:-0.388px;">Core Section</div>
<div class="hd" style="left:50px;top:244px;width:14px"></div>
<div id="tr15" class="tr" style="left:67.3px;top:254px;letter-spacing:-0.139px;">Kitchen</div>
<div class="hd" style="left:50px;top:262px;width:14px"></div>
<div id="tr16" class="tr" style="left:67.3px;top:272px;letter-spacing:-0.171px;">Living Room Sections</div>
<div class="hd" style="left:50px;top:280px;width:14px"></div>
<div id="tr17" class="tr" style="left:67.3px;top:290px;letter-spacing:-0.261px;">Service Wing Section</div>
<div class="hd" style="left:50px;top:298px;width:14px"></div>
<div id="tr18" class="tr" style="left:67.3px;top:308px;letter-spacing:-0.340px;">Service Wing Street Facade</div>
<div class="hd" style="left:50px;top:316px;width:14px"></div>
<div id="tr19" class="tr" style="left:67.3px;top:326px;letter-spacing:-0.146px;">Short section 1</div>
<div class="hd" style="left:50px;top:334px;width:14px"></div>
<div id="tr20" class="tr" style="left:67.3px;top:344px;letter-spacing:-0.211px;">Short Section 2</div>
<div class="hd" style="left:50px;top:352px;width:14px"></div>
<div id="tr21" class="tr" style="left:67.3px;top:362px;letter-spacing:-0.211px;">Short Section 3</div>
<div class="hd" style="left:50px;top:370px;width:14px"></div>
<div class="vd" style="left:9px;top:16px;height:370px"></div>
<div class="vd" style="left:29px;top:16px;height:370px"></div>
<div class="vd" style="left:49px;top:35px;height:137px"></div>
<div class="vd" style="left:49px;top:215px;height:170px"></div>
<div class="hd" style="left:14px;top:10px;width:6px"></div>
<div class="box" style="left:5px;top:6px"><i></i></div>
<div class="hd" style="left:34px;top:28px;width:10px"></div>
<div class="box" style="left:25px;top:24px"><i></i></div>
<div class="hd" style="left:34px;top:190px;width:10px"></div>
<div class="box" style="left:25px;top:186px"><i></i><b></b></div>
<div class="hd" style="left:34px;top:208px;width:10px"></div>
<div class="box" style="left:25px;top:204px"><i></i></div>
<svg class="a" style="left:22px;top:2px" width="14" height="14" viewBox="0 0 14 14"><path d="M.6 3 V.6 H3 M11 .6 H13.4 V3 M13.4 11 V13.4 H11 M3 13.4 H.6 V11" fill="none" stroke="#222" stroke-width="1.1"/><path d="M5 3.4 H10.6 L9.8 9.6 Q9.6 10.6 8.6 10.6 H4.4 Q3.2 10.6 3.3 9.4 L3.8 4.6 Q4 3.4 5 3.4Z" fill="#cfd3d9" stroke="#222" stroke-width="1"/><rect x="5.2" y="5.4" width="3" height="3.4" fill="#b8bdc6"/></svg>
</div>
<div class="sb" style="left:321px;top:581px;width:15px;height:382px"></div>
<div class="ua" style="left:325px;top:587px"></div>
<div class="thumb" style="left:321px;top:600px;width:14.5px;height:160px"></div>
<div class="grip" style="left:325px;top:676px"></div>
<div class="da" style="left:325px;top:953.5px"></div>
<div class="a" style="left:342px;top:148px;width:5px;height:819px;background:linear-gradient(90deg,#f6f6f6,#e9eedf 30%,#f8f8f8 55%,#ffffff)"></div>
<div class="a" style="left:347px;top:147px;width:2px;height:819px;background:linear-gradient(90deg,#858585,#626262)"></div>
<div class="a" style="left:347px;top:146px;width:1330px;height:3px;background:linear-gradient(#b8b8b8 0,#6e6e6e 35%,#5e5e5e 80%,#c0c0c0 100%)"></div>
<div class="a" style="left:349px;top:148px;width:1316px;height:797px;background:#fff;overflow:hidden">
<svg class="a" style="left:0;top:0" width="1316" height="797" viewBox="349 148 1316 797" fill="none" stroke-linecap="square" shape-rendering="crispEdges">
<ellipse cx="911.3" cy="593.9" rx="417" ry="249.5" stroke="#000" stroke-width="2.9"/>
<path d="M413 146 C430 156 450 163 470 167 C478 168 484 168.5 491 168.5" stroke="#e10000" stroke-width="2.8" stroke-linecap="butt"/>
<path d="M492.3 140 V170.3 H505.8 V140" stroke="#000080" stroke-width="4.4" stroke-linejoin="round"/>
<path d="M355 946 C375 925 400 908 424 898.5 C440 892 460 887.5 482 887" stroke="#e10000" stroke-width="2.8" stroke-linecap="butt"/>
<path d="M483.8 950 V884.3 H497.2 V950" stroke="#000080" stroke-width="4.8" stroke-linejoin="round"/>
<g stroke="#000" stroke-width="2.7" stroke-linejoin="miter">
<path d="M1263.5 507.4 H1375.7 L1383 514 M1263.5 507.4 L1251.5 514.5 V627 L1263 634 H1377.5 L1383.5 628"/>
<path d="M1250.8 514 h4 v4 h-4z M1250.8 623 h4 v4 h-4z" fill="#000" stroke-width="1"/>
<path d="M1405 520 V514.3 H1370.2 V627.7 H1405 V622"/>
<path d="M1398 520 H1405 M1398 622 H1405"/>
<path d="M1371 516 L1398.5 527 V615 L1371 626.5"/>
<path d="M1384 514.5 L1407.5 526 V616 L1384 627.5"/>
<path d="M1398.5 526.8 H1407.5 M1398.5 615.3 H1407.5"/>
</g>
</svg>

</div>
<svg class="a" style="left:1610px;top:150px" width="52" height="14" viewBox="1610 150 52 14"><rect x="1612.5" y="157.5" width="11" height="3.4" fill="#fff" stroke="#3c3c3c" stroke-width="1"/><rect x="1633.2" y="151.6" width="7.2" height="7.6" rx="1" fill="#fff" stroke="#3c3c3c" stroke-width="1"/><rect x="1630.7" y="153.8" width="7.4" height="7.6" rx="1" fill="#f4f4f4" stroke="#3c3c3c" stroke-width="1.1"/><rect x="1633.6" y="156.2" width="1.8" height="3" fill="#fff" stroke="#3c3c3c" stroke-width=".9"/><path d="M1649.5 153.5 L1657.5 160.5 M1657.5 153.5 L1649.5 160.5" stroke="#3c3c3c" stroke-width="3.9" stroke-linecap="butt"/><path d="M1650 154 L1657 160 M1657 154 L1650 160" stroke="#f6f6f6" stroke-width="1.5"/></svg>
<div class="sb" style="left:1664px;top:148px;width:13px;height:798px;background:#efefef"></div>
<div class="ua" style="left:1668px;top:155px"></div>
<div class="da" style="left:1668px;top:936px"></div>
<div class="a" style="left:1665px;top:540px;width:10px;height:12px;border:1px solid #a0a0a0;border-radius:2px;background:linear-gradient(90deg,#f4f4f4,#d4d4d4)"></div>
<div class="a" style="left:349px;top:945px;width:1328px;height:20px;background:#fff"></div>
<div class="a" style="left:349px;top:945px;width:245px;height:18px;background:#f1f1f1"></div>
<div class="a" style="left:594px;top:947px;width:1069px;height:16px;background:#eaeaea"></div>
<div class="a" style="left:1663px;top:946px;width:14px;height:17px;background:#f0f0f0"></div>
<div id="t_sc" class="t" style="left:374px;top:947px;letter-spacing:-0.240px;font-size:11px;color:#111">1 : 100</div>
<svg class="a" style="left:426px;top:946px" width="165" height="18" viewBox="426 946 165 18" fill="none"><rect x="428.6" y="947.9" width="14.8" height="10.6" fill="url(#chk2)" stroke="#2e2e30" stroke-width="1.1"/><path d="M450.3 951.6 L453.6 948.6 H464.6 L461.4 951.6Z" fill="#f6f6f7" stroke="#2e2e30" stroke-width="1"/><path d="M461.4 951.6 L464.6 948.6 V955.8 L461.4 959Z" fill="#c8cbd1" stroke="#2e2e30" stroke-width="1"/><rect x="450.3" y="951.6" width="11.1" height="7.4" fill="#e6e8ec" stroke="#2e2e30" stroke-width="1"/><path d="M474.3 946.6 V957.2 M469 951.9 H479.6 M470.6 948.2 L478 955.6 M478 948.2 L470.6 955.6" stroke="#e0a21a" stroke-width="1"/><circle cx="474.3" cy="951.9" r="3.3" fill="#ffe04a" stroke="#d89a12" stroke-width=".9"/><path d="M478.20000000000005 953.2 L483.0 958.0 M483.0 953.2 L478.20000000000005 958.0" stroke="#d8262c" stroke-width="1.8"/><circle cx="496.4" cy="952.4" r="3.6" fill="#d9ecfa" stroke="#2f78c8" stroke-width="1.1"/><path d="M492.6 958.6 H499.4" stroke="#2e2e30" stroke-width="1.2"/><path d="M500.40000000000003 953.6 L505.2 958.4 M505.2 953.6 L500.40000000000003 958.4" stroke="#d8262c" stroke-width="1.8"/><path d="M515.6 959.4 V950.4 H526.4 M518.4 959.4 V953 H526.4" stroke="#2f78c8" stroke-width="1.2"/><path d="M511.4 955.6 H514.2 M520.6 948.6 H522.6" stroke="#2e2e30" stroke-width="1.2"/><path d="M521.0 953.2 L525.8 958.0 M525.8 953.2 L521.0 958.0" stroke="#d8262c" stroke-width="1.8"/><path d="M536.4 959.4 V950.4 H544 M539.2 959.4 V953 H543" stroke="#2f78c8" stroke-width="1.2"/><path d="M532.2 955.6 H535 M541.4 948.6 H543.4 M540.4 956 H542.4" stroke="#2e2e30" stroke-width="1.2"/><circle cx="545.6" cy="953" r="2.6" fill="#e4f1fb" stroke="#2f78c8" stroke-width="1"/><rect x="544.6" y="955.6" width="2" height="3" rx=".8" fill="#fff" stroke="#2e3a4a" stroke-width=".8"/><path d="M553.2 951 C555 949.4 556.4 952.2 557.4 954.4" stroke="#1e2a3a" stroke-width="1.1"/><circle cx="559.4" cy="955.8" r="2.3" stroke="#1e2a3a" stroke-width="1.1"/><circle cx="565.6" cy="953.2" r="2.3" stroke="#1e2a3a" stroke-width="1.1"/><path d="M561.6 955 L563.4 954.2 M562 949.4 C564.6 948 567.6 949.6 568.2 952" stroke="#1e2a3a" stroke-width="1.1"/><circle cx="582.2" cy="952.6" r="2.5" fill="#eef6fd" stroke="#2f78c8" stroke-width="1"/><rect x="581.2" y="955.2" width="2" height="3" rx=".8" fill="#fff" stroke="#2e4a6a" stroke-width=".8"/></svg>
<div class="la" style="left:600px;top:950px"></div>
<div class="a" style="left:1121px;top:947px;width:15px;height:15px;border:1px solid #a5a5a5;border-radius:2px;background:linear-gradient(#f6f6f6,#e4e4e4 45%,#cfcfcf 55%,#c4c4c4)"></div>
<div class="ra" style="left:1653px;top:951px"></div>
<svg class="a" style="left:1665px;top:951px" width="12" height="12" viewBox="0 0 12 12" fill="#b4b4b4"><rect x="9" y="2" width="2" height="2"/><rect x="6" y="5" width="2" height="2"/><rect x="9" y="5" width="2" height="2"/><rect x="3" y="8" width="2" height="2"/><rect x="6" y="8" width="2" height="2"/><rect x="9" y="8" width="2" height="2"/></svg>
<div class="a" style="left:349px;top:965px;width:1328px;height:1px;background:#8a8a8a"></div>
<div class="a" style="left:2px;top:966px;width:1675px;height:23px;background:linear-gradient(#f3f3f3,#e8e8e8 50%,#d8d8d8)"></div>
<div id="t_st" class="t" style="left:4.4px;top:971px;letter-spacing:-0.240px;color:#111">Click to select, TAB for alternates, CTRL adds, SHIFT unselects.</div>
<svg class="a" style="left:868px;top:968px" width="240" height="20" viewBox="868 968 240 20" fill="none"><path d="M875 971.6 L878 970.4 L881 971.6 V977 L878 978.2 L875 977Z" fill="#86c65a" stroke="#3d7a22" stroke-width=".9"/><path d="M870.6 976.6 L873.8 975.4 L877 976.6 V983.6 L873.8 985 L870.6 983.6Z" fill="#5aa0e6" stroke="#1f5fa8" stroke-width=".9"/><path d="M873.8 978 V985" stroke="#d6e8fa" stroke-width=".8"/><path d="M881.6 972.6 V975.4 H884.8 V972.6 C886.6 973.4 886.8 976.6 884.6 977.4 V984 Q884.6 985 883.2 985 Q881.8 985 881.8 984 V977.4 C879.6 976.6 879.8 973.4 881.6 972.6Z" fill="#f4f6f8" stroke="#2e3a4a" stroke-width=".9"/><rect x="1056.6" y="970.8" width="15" height="14" rx="1.2" fill="#fdfdfd" stroke="#2e3640" stroke-width="1.2"/><path d="M1056.6 973.4 H1071.6" stroke="#2e3640" stroke-width="1.2"/><rect x="1059" y="975.6" width="2.2" height="2.2" stroke="#2e3640" stroke-width=".9"/><rect x="1061" y="980.4" width="1.8" height="1.8" fill="#2e3640"/><path d="M1063.4 976.8 H1069.6 M1065 981.4 H1069.6" stroke="#2e3640" stroke-width="1.3"/><rect x="1085.2" y="970" width="12" height="13.6" fill="#b9b9b9"/><path d="M1083 979 H1089 M1086.8 976.6 L1089.4 979 L1086.8 981.4" stroke="#e8e8e8" stroke-width="1.2"/><path d="M1086 972.6 L1088.4 975" stroke="#d8d8d8" stroke-width="1"/></svg><svg class="a" style="left:1588px;top:969px" width="18" height="18" viewBox="1588 969 18 18" fill="none"><path d="M1589.6 971.6 H1603.8 L1598.6 977.6 V984.6 L1595 983 V977.6Z" fill="#eef1f4" stroke="#4a5058" stroke-width="1.1" stroke-linejoin="round"/><ellipse cx="1596.7" cy="971.6" rx="7.1" ry="1.1" fill="#dfe3e8" stroke="#4a5058" stroke-width=".8"/></svg>
<div class="a" style="left:894px;top:968px;width:155px;height:20px;background:#fff"></div>
<div id="t_ws" class="t" style="left:896.4px;top:971px;letter-spacing:-0.139px;color:#111">(Not Editable) Workset1</div>
<div class="arr" style="left:1037px;top:977px;border-left-width:4px;border-right-width:4px;border-top-width:4px;border-top-color:#111"></div>
<div class="a" style="left:1105px;top:968px;width:155px;height:20px;background:#fff"></div>
<div id="t_mm" class="t" style="left:1108.5px;top:971px;letter-spacing:0.051px;color:#9a9a9a">Main Model</div>
<div class="arr" style="left:1249px;top:977px;border-top-color:#a0a0a0"></div>
<div class="cb" style="left:1388px;top:970px"></div>
<div id="t_eo" class="t" style="left:1405.3px;top:971px;letter-spacing:-0.148px;color:#111">Editable Only</div>
<div class="cb" style="left:1487px;top:970px"></div>
<svg class="a" style="left:1488px;top:971px" width="12" height="12" viewBox="0 0 12 12"><path d="M2 6 L5 9.5 L10 2" stroke="#2c9a2c" stroke-width="2" fill="none"/></svg>
<div id="t_pd" class="t" style="left:1504.4px;top:971px;letter-spacing:-0.405px;color:#111">Press &amp; Drag</div>
<div id="t_f0" class="t" style="left:1606.4px;top:972px;letter-spacing:-1.819px;color:#111;font-size:11px;letter-spacing:-.4px">:0</div>
<div class="a" style="left:0;top:988px;width:1677px;height:4px;background:linear-gradient(#2a4467 0,#2a4467 35%,#5f83ae 40%,#7fa0c6)"></div>
<div class="a" style="left:1667px;top:989px;width:10px;height:3px;background:#a9bdd4"></div>
<div class="a" style="left:0;top:989px;width:28px;height:3px;background:#24466e"></div><div class="a" style="left:124px;top:989px;width:59px;height:3px;background:#f2f4f7;border:1px solid #8a9bb0;border-bottom:0;border-radius:2px 2px 0 0"></div><div class="a" style="left:186px;top:989px;width:59px;height:3px;background:#eef1f5;border:1px solid #8a9bb0;border-bottom:0;border-radius:2px 2px 0 0"></div><div class="a" style="left:308px;top:989px;width:59px;height:3px;background:#eef1f5;border:1px solid #8a9bb0;border-bottom:0;border-radius:2px 2px 0 0"></div>
</body></html>
